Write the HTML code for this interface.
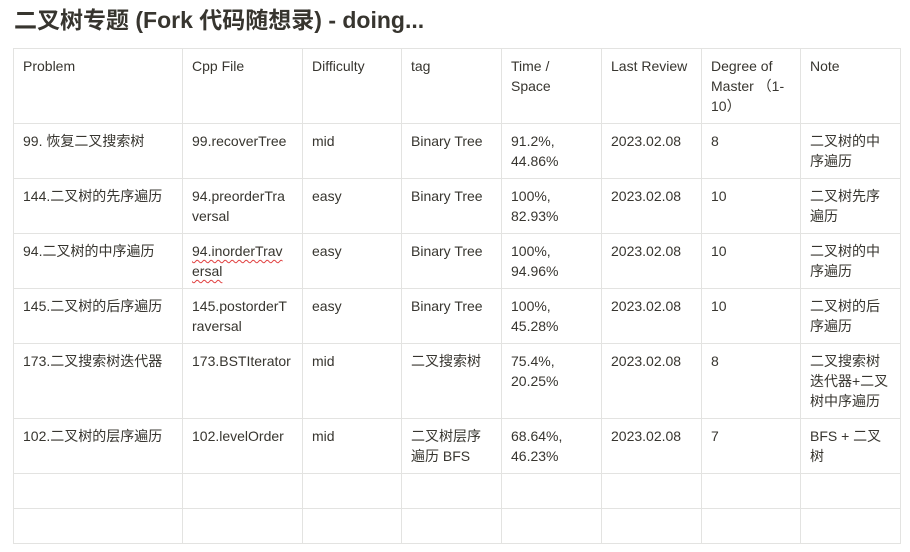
<!DOCTYPE html>
<html><head><meta charset="utf-8"><style>
body{margin:0;background:#fff;width:910px;height:552px;overflow:hidden;font-family:"Liberation Sans","Noto Sans CJK SC",sans-serif;color:#37352f}
h1{position:absolute;left:14px;top:4px;margin:0;font-size:23px;font-weight:bold;color:#37352f;line-height:32px}
table{position:absolute;left:13px;top:48px;border-collapse:collapse;table-layout:fixed;font-size:14px;line-height:20px}
td{border:1px solid #e3e3e1;vertical-align:top;padding:7px 11px 0 9px;overflow-wrap:anywhere;word-break:normal;overflow:hidden}
.u{text-decoration:underline wavy #e03e3e;text-decoration-thickness:1px;text-underline-offset:3px}
</style></head><body>
<h1>二叉树专题 (Fork 代码随想录) - doing...</h1>
<table>
<colgroup><col style="width:169px"><col style="width:120px"><col style="width:99px"><col style="width:100px"><col style="width:100px"><col style="width:100px"><col style="width:99px"><col style="width:100px"></colgroup>
<tr style="height:75px"><td>Problem</td><td>Cpp File</td><td>Difficulty</td><td>tag</td><td>Time / Space</td><td>Last Review</td><td>Degree of Master （1-10）</td><td>Note</td></tr>
<tr style="height:55px"><td>99. 恢复二叉搜索树</td><td>99.recoverTree</td><td>mid</td><td>Binary Tree</td><td>91.2%, 44.86%</td><td>2023.02.08</td><td>8</td><td>二叉树的中序遍历</td></tr>
<tr style="height:55px"><td>144.二叉树的先序遍历</td><td>94.preorderTra<br>versal</td><td>easy</td><td>Binary Tree</td><td>100%, 82.93%</td><td>2023.02.08</td><td>10</td><td>二叉树先序遍历</td></tr>
<tr style="height:55px"><td>94.二叉树的中序遍历</td><td><span class="u">94.inorderTrav</span><br><span class="u">ersal</span></td><td>easy</td><td>Binary Tree</td><td>100%, 94.96%</td><td>2023.02.08</td><td>10</td><td>二叉树的中序遍历</td></tr>
<tr style="height:55px"><td>145.二叉树的后序遍历</td><td>145.postorderT<br>raversal</td><td>easy</td><td>Binary Tree</td><td>100%, 45.28%</td><td>2023.02.08</td><td>10</td><td>二叉树的后序遍历</td></tr>
<tr style="height:75px"><td>173.二叉搜索树迭代器</td><td>173.BSTIterator</td><td>mid</td><td>二叉搜索树</td><td>75.4%, 20.25%</td><td>2023.02.08</td><td>8</td><td>二叉搜索树迭代器+二叉树中序遍历</td></tr>
<tr style="height:55px"><td>102.二叉树的层序遍历</td><td>102.levelOrder</td><td>mid</td><td>二叉树层序遍历 BFS</td><td>68.64%, 46.23%</td><td>2023.02.08</td><td>7</td><td>BFS + 二叉树</td></tr>
<tr style="height:35px"><td></td><td></td><td></td><td></td><td></td><td></td><td></td><td></td></tr>
<tr style="height:35px"><td></td><td></td><td></td><td></td><td></td><td></td><td></td><td></td></tr>
</table>
</body></html>
